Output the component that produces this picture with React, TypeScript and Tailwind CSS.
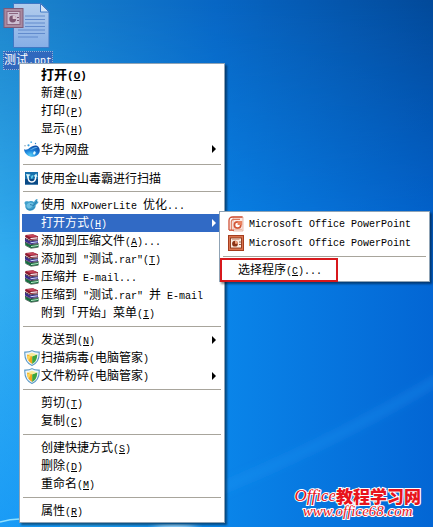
import { Fragment, type ReactNode } from "react";
import clsx from "clsx";

type Item = {
  label: string;
  hotkey?: string;
  tail?: string;
  icon?: ReactNode;
  arrow?: boolean;
  bold?: boolean;
  tall?: boolean;
  submenu?: boolean;
};

const DropIcon = () => (
  <svg viewBox="0 0 16 16" className="size-4">
    <defs>
      <radialGradient id="drop" cx="0.4" cy="0.85" r="0.8">
        <stop offset="0" stopColor="#56cdf5" />
        <stop offset="0.5" stopColor="#1c84dc" />
        <stop offset="1" stopColor="#0f4fa8" />
      </radialGradient>
    </defs>
    <path
      d="M0 8.200c2 1 3.700.2 5.400-1.200C8 5.200 10.600 3.700 13 4.800c2.300 1.200 3.400 4.200 2.400 6.800-1 2.600-3.600 4.200-6.900 4.200C4.500 15.800.6 13 0 8.200z"
      fill="url(#drop)"
    />
    <path d="M6 8.500c2-.5 3-2.300 5.500-2.500 1 0 2 .4 2.300 1.200-1.300-.4-2.700 0-4 .6C8.500 8.500 7.300 9 6 8.500z" fill="#5fb0ea" />
    <ellipse cx="10.400" cy="12" rx="1.200" ry="1.700" fill="#e6fbff" transform="rotate(25 10.400 12)" />
    <circle cx="4.500" cy="4.300" r="1.100" fill="#3aa0e0" />
    <circle cx="7.200" cy="1.200" r="0.900" fill="#56b6ea" />
    <circle cx="1" cy="4.800" r="0.700" fill="#8098a8" />
    <circle cx="11.500" cy="2.500" r="0.700" fill="#2d86c8" />
  </svg>
);

const ScanIcon = () => (
  <svg viewBox="0 0 16 16" className="size-4">
    <rect x="1" y="2" width="13" height="12.500" fill="#1670ac" />
    <path d="M1 9h13v5.500H1z" fill="#0a4a86" />
    <path d="M4 6.500c0 3.500 1.500 5.500 3.800 5.500 2.500 0 4-2.500 4-6" fill="none" stroke="#fff" strokeWidth="1.400" />
    <path d="M2 4l4.500.4L3.500 8zM9.500 6.200l2.800-2.700 1.200 3.400z" fill="#d6f5fc" />
    <path d="M7 5.500l.8 3L9 5" fill="none" stroke="#5fd0ee" />
  </svg>
);

const NxIcon = () => (
  <svg viewBox="0 0 16 16" className="size-4">
    <path
      d="M.6 5.500C1.500 3.700 3.500 4.500 5 4.600c1.700-.8 3.700-.6 5 .3.800-1.500 1.800-3 3.300-3 .6.700-.2 1.800-.6 2.600.9-.2 1.800-.1 1.800.6-.6 1.500-1.900 2.400-2.800 3 .2 3.300-2.200 5.700-5.300 5.700C3 13.800.9 11.300 1.300 8.300 1.400 7.200.1 6.800.6 5.500z"
      fill="#3f9fcb"
    />
    <path d="M2.600 8c1-2.600 4-3.200 6.200-2C10 7.500 8 11 4.600 11.500 3 10.700 2.300 9.400 2.600 8z" fill="#6fc0e2" />
    <path d="M6 7.500l3.500 1L13 4" fill="none" stroke="#1f6f9f" strokeWidth="0.800" />
    <path d="M3 11.800c2 1.500 6 1.200 7.500-1.800" fill="none" stroke="#2c80b2" strokeWidth="0.800" />
  </svg>
);

const RarIcon = () => (
  <svg viewBox="0 0 16 16" className="size-4">
    <path d="M1.500 2L9 1.300l5 2v2.900l-8 .8-5-3z" fill="#8c1c30" />
    <path d="M2 2.300l7-.7 4.500 1.800-7.300.7z" fill="#c8455a" />
    <path d="M6.500 5l7-.7v1.100l-7 .7z" fill="#fff" />
    <path d="M1 5.600l5 2.600 8-1v2.900l-7.500 1.100L1 8.500z" fill="#3a2f8c" />
    <path d="M1 5.300l5 2.500 8-.9" fill="none" stroke="#2a1420" strokeWidth="0.800" />
    <path d="M6.500 9.200l7.200-1v1.100l-7.200 1z" fill="#d3dcff" />
    <path d="M1 9.500l5.500 2.600 8-1.200v3L7 15 1.300 12z" fill="#14713f" />
    <path d="M1 9.200l5.500 2.500 8-1.200" fill="none" stroke="#1a1424" strokeWidth="0.800" />
    <path d="M7 13l7-1v1.100l-7 1z" fill="#bff0cd" />
    <path d="M1.300 12.300L7 15.300l7.500-1.200" fill="none" stroke="#102a1c" strokeWidth="0.600" />
  </svg>
);

const ShieldIcon = () => (
  <svg viewBox="0 0 16 16" className="size-4">
    <path
      d="M8 .6c2 1.300 4.600 1.600 7.200 1.500.3 6-1 10.800-7.200 13.400C1.800 12.900.5 8.100.8 2.100 3.400 2.200 6 1.900 8 .6z"
      fill="#eef6fb"
      stroke="#5c9ac6"
      strokeWidth="1.100"
    />
    <path d="M3 4.500L8.200 6v7.900C4.500 11.900 3 9 3 4.500z" fill="#f4a51c" />
    <path d="M8.200 6L13.200 4.500c0 4.500-1.300 7.200-5 9.400z" fill="#3ea53b" />
    <path d="M3 4.500l4.800-1.700 5.400 1.700L8.200 6.400z" fill="#f7ec9a" />
    <path d="M3.100 5.500c.2 2.500.5 4 1.400 5.200L7 6.300z" fill="#fbd55a" />
  </svg>
);

const PptNewIcon = () => (
  <svg viewBox="0 0 16 16" className="size-4">
    <path d="M5 1h10v14H5z" fill="#fbeae4" stroke="#e0a18c" strokeWidth="0.700" />
    <path d="M1 14V4.500C1 2.200 2.500 1 4.500 1h10" fill="none" stroke="#cf5136" strokeWidth="1.300" />
    <path d="M3.300 14V6c0-1.800 1-2.700 2.700-2.700h6" fill="none" stroke="#dd7a5c" strokeWidth="1.200" />
    <path d="M1 14.200h5" stroke="#cf5136" strokeWidth="1.300" />
    <circle cx="9.600" cy="9" r="3.200" fill="#fff" stroke="#d25535" strokeWidth="1.700" />
    <path d="M9.600 9V5h4.600v4z" fill="#e9825f" />
    <path d="M6 13.300h8" stroke="#eab19d" />
  </svg>
);

const PptOldIcon = () => (
  <svg viewBox="0 0 16 16" className="size-4">
    <rect x="0.500" y="0.500" width="15" height="15" fill="#d9744f" stroke="#a63d1e" />
    <rect x="2.500" y="3" width="11" height="10" fill="#fbeee4" stroke="#8d3518" strokeWidth="0.900" />
    <path d="M4 4.600h7.500" stroke="#d8a58e" />
    <circle cx="7" cy="8.700" r="2.900" fill="#8a3316" />
    <path d="M7 8.700V5.800a2.900 2.900 0 0 1 2.900 2.900z" fill="#f0a27d" />
    <path d="M11.200 7h1.500M11.200 9.500h1.500" stroke="#7c2e14" strokeWidth="1.200" />
  </svg>
);

const FileIcon = () => (
  <svg viewBox="0 0 48 48" className="size-12">
    <defs>
      <linearGradient id="sheet" x1="0" y1="0" x2="0" y2="1">
        <stop offset="0" stopColor="#b4cdec" />
        <stop offset="1" stopColor="#86aee6" />
      </linearGradient>
    </defs>
    <path d="M10.500 1.500H38l8 8V45.500H10.500z" fill="url(#sheet)" stroke="#3f78c4" />
    <path d="M37.500 1.500v8.500H46z" fill="#d5e5f7" stroke="#3f78c4" />
    <path
      d="M22 14h20M22 17.500h20M22 21h20M22 24.500h20M15 28h27M15 31.500h27M15 35h20"
      stroke="#5c86c9"
      strokeWidth="0.900"
    />
    <rect x="1" y="6.500" width="19" height="19" fill="#a98a9f" stroke="#7d5a78" />
    <rect x="4" y="9.500" width="13" height="13" fill="#cdbfd2" stroke="#8b6580" />
    <path d="M6 11.500h9" stroke="#8b6580" />
    <circle cx="9.700" cy="17" r="3.400" fill="#7c5672" />
    <path d="M9.700 17v-3.400a3.400 3.400 0 0 1 3.400 3.400z" fill="#d9c3d0" />
    <path d="M14 15.500h2M14 18.500h2" stroke="#7c5672" />
  </svg>
);

const groups: Item[][] = [
  [
    { label: "打开", hotkey: "O", bold: true },
    { label: "新建", hotkey: "N" },
    { label: "打印", hotkey: "P" },
    { label: "显示", hotkey: "H" },
    { label: "华为网盘", icon: <DropIcon />, arrow: true, tall: true },
  ],
  [{ label: "使用金山毒霸进行扫描", icon: <ScanIcon /> }],
  [
    { label: "使用 NXPowerLite 优化...", icon: <NxIcon /> },
    { label: "打开方式", hotkey: "H", arrow: true, submenu: true },
    { label: "添加到压缩文件", hotkey: "A", tail: "...", icon: <RarIcon /> },
    { label: '添加到 "测试.rar"', hotkey: "T", icon: <RarIcon /> },
    { label: "压缩并 E-mail...", icon: <RarIcon /> },
    { label: '压缩到 "测试.rar" 并 E-mail', icon: <RarIcon /> },
    { label: "附到「开始」菜单", hotkey: "I" },
  ],
  [
    { label: "发送到", hotkey: "N", arrow: true },
    { label: "扫描病毒(电脑管家)", icon: <ShieldIcon /> },
    { label: "文件粉碎(电脑管家)", icon: <ShieldIcon />, arrow: true },
  ],
  [
    { label: "剪切", hotkey: "T" },
    { label: "复制", hotkey: "C" },
  ],
  [
    { label: "创建快捷方式", hotkey: "S" },
    { label: "删除", hotkey: "D" },
    { label: "重命名", hotkey: "M" },
  ],
  [{ label: "属性", hotkey: "R" }],
];

// Latin runs are half the width of a Chinese character
const Latin = ({ children, bold }: { children: ReactNode; bold?: boolean }) => (
  <span className={clsx("font-['Liberation_Mono',monospace]", bold ? "text-[11px]" : "text-[10px]")}>{children}</span>
);

const Label = ({ label, hotkey, tail, bold }: Pick<Item, "label" | "hotkey" | "tail" | "bold">) => (
  <span className={clsx("whitespace-pre", bold && "text-[13px] font-bold")}>
    {label.split(/([ -~]+)/).map((part, i) =>
      i % 2 ? <Latin key={i}>{part}</Latin> : <Fragment key={i}>{part}</Fragment>
    )}
    {hotkey && (
      <Latin bold={bold}>
        (<u className="underline-offset-1">{hotkey}</u>){tail}
      </Latin>
    )}
  </span>
);

const Separator = () => (
  <li role="separator" className="flex h-[9px] items-center px-px">
    <span className="h-px w-full bg-[#a8a59c]" />
  </li>
);

const menuBox = "border border-[#8fa3b5] bg-white p-0.5 shadow-[2px_2px_2px_rgba(0,0,0,0.45)]";

const OpenWithMenu = () => (
  <ul role="menu" className={clsx("absolute -top-[3px] left-full z-10 -ml-[3px] w-[211px] text-black", menuBox)}>
    {[<PptNewIcon />, <PptOldIcon />].map((icon, i) => (
      <li key={i}>
        <button role="menuitem" className="flex h-[19px] w-full items-center gap-[5px] pl-1.5">
          {icon}
          <Label label="Microsoft Office PowerPoint" />
        </button>
      </li>
    ))}
    <Separator />
    <li className="relative">
      <button role="menuitem" className="flex h-[18px] w-full items-center pl-4">
        <Label label="选择程序" hotkey="C" tail="..." />
      </button>
      <span className="pointer-events-none absolute -inset-y-[3px] -left-0.5 w-[118px] border-2 border-[#d8181c]" />
    </li>
  </ul>
);

const MenuRow = ({ icon, arrow, tall, submenu, ...label }: Item) => (
  <li className="relative">
    <button
      role="menuitem"
      className={clsx(
        "flex w-full items-center gap-px pr-1.5 pl-0.5",
        tall ? "h-[22px]" : "h-[18px]",
        submenu && "bg-[#316ac5] text-white"
      )}
    >
      <span className="size-4 shrink-0">{icon}</span>
      <Label {...label} />
      {arrow && (
        <svg viewBox="0 0 4 8" className="ml-auto h-2 w-1 fill-current">
          <path d="M0 0l4 4-4 4z" />
        </svg>
      )}
    </button>
    {submenu && <OpenWithMenu />}
  </li>
);

const Wallpaper = () => (
  <svg
    viewBox="0 0 433 527"
    preserveAspectRatio="none"
    className="absolute inset-0 size-full"
    aria-hidden="true"
  >
    <defs>
      <linearGradient id="base" x1="0" y1="0" x2="1" y2="0">
        <stop offset="0" stopColor="#1e86cc" />
        <stop offset="0.500" stopColor="#0866c4" />
        <stop offset="1" stopColor="#034a9a" />
      </linearGradient>
      <linearGradient id="low" x1="0" y1="0" x2="1" y2="0">
        <stop offset="0" stopColor="#32adf0" />
        <stop offset="0.500" stopColor="#0a86ea" />
        <stop offset="1" stopColor="#0366d4" />
      </linearGradient>
      <linearGradient id="fade" x1="0" y1="0" x2="0" y2="1">
        <stop offset="0" stopColor="#000" />
        <stop offset="0.500" stopColor="#fff" />
      </linearGradient>
      <linearGradient id="floor" x1="0" y1="0" x2="0" y2="1">
        <stop offset="0.550" stopColor="#0a90fa" stopOpacity="0" />
        <stop offset="1" stopColor="#0a90fa" stopOpacity="0.600" />
      </linearGradient>
      <mask id="down">
        <rect width="433" height="527" fill="url(#fade)" />
      </mask>
      <filter id="soft">
        <feGaussianBlur stdDeviation="4" />
      </filter>
    </defs>
    <rect width="433" height="527" fill="url(#base)" />
    <rect width="433" height="527" fill="url(#low)" mask="url(#down)" />
    <rect width="60" height="527" fill="url(#floor)" />
    <path d="M200 497Q330 445 440 378" fill="none" stroke="#2e9cf6" strokeOpacity="0.350" strokeWidth="8" filter="url(#soft)" />
    <path d="M0 522q10-3 20-3" fill="none" stroke="#8fe0ff" strokeWidth="1.500" />
    <ellipse cx="175" cy="529" rx="22" ry="4" fill="#d8f4ff" filter="url(#soft)" />
  </svg>
);

export default function App() {
  return (
    <main className="relative min-h-screen overflow-hidden font-['Noto_Sans_CJK_SC',sans-serif] text-xs leading-[18px] text-black">
      <Wallpaper />

      <div className="absolute top-0.5 left-[3px] flex flex-col items-start">
        <FileIcon />
        <span className="mt-px border border-dotted border-[#8fb0d8] bg-[#3068bd] leading-[14px] text-white">
          <Label label="测试.ppt" />
        </span>
      </div>

      <ul role="menu" className={clsx("absolute top-[63px] left-[19px] w-[206px]", menuBox)}>
        {groups.map((items, i) => (
          <Fragment key={i}>
            {i > 0 && <Separator />}
            {items.map((item) => (
              <MenuRow key={item.label} {...item} />
            ))}
          </Fragment>
        ))}
      </ul>

      <div className="absolute right-3 bottom-2 text-center leading-4 text-[#e8141c] [paint-order:stroke_fill] [-webkit-text-stroke:2px_white]">
        <p className="flex items-center">
          <span className="font-['Liberation_Serif',serif] text-[17px] italic">Office</span>
          <span className="text-[17px] font-black">教程学习网</span>
        </p>
        <a href="#" className="block font-['Liberation_Serif',serif] text-[15px] leading-[15px] italic">
          www.office68.com
        </a>
      </div>
    </main>
  );
}
